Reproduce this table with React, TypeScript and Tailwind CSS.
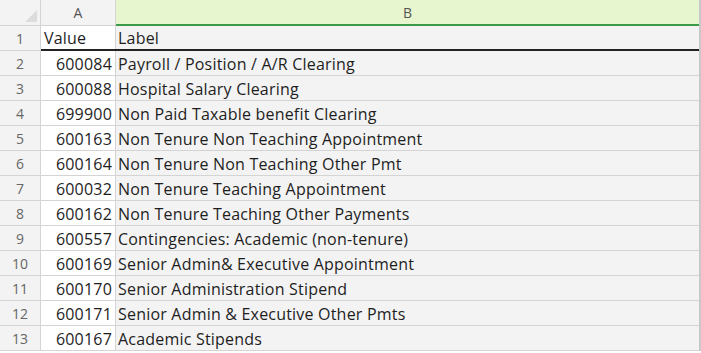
import React from 'react';

const rows: [string, string][] = [
  ['Value', 'Label'],
  ['600084', 'Payroll / Position / A/R Clearing'],
  ['600088', 'Hospital Salary Clearing'],
  ['699900', 'Non Paid Taxable benefit Clearing'],
  ['600163', 'Non Tenure Non Teaching Appointment'],
  ['600164', 'Non Tenure Non Teaching Other Pmt'],
  ['600032', 'Non Tenure Teaching Appointment'],
  ['600162', 'Non Tenure Teaching Other Payments'],
  ['600557', 'Contingencies: Academic (non-tenure)'],
  ['600169', 'Senior Admin& Executive Appointment'],
  ['600170', 'Senior Administration Stipend'],
  ['600171', 'Senior Admin & Executive Other Pmts'],
  ['600167', 'Academic Stipends'],
];

const App: React.FC = () => {
  return (
    <div className="w-[701px] h-[353px] overflow-hidden bg-white font-['Open_Sans','Noto_Sans',sans-serif] text-[16px] tracking-[0.2px] text-[#1e1e1e]">
      {/* column headers */}
      <div className="flex h-[26px]">
        <div className="relative w-[41px] shrink-0 bg-[#f3f3f3] border-r border-[#d4d4d4] border-b border-b-[#d4d4d4]">
          <div className="absolute right-[3px] bottom-[3px] w-0 h-0 border-l-[12px] border-l-transparent border-b-[12px] border-b-[#dcdcdc]" />
        </div>
        <div className="w-[75px] shrink-0 bg-[#f3f3f3] border-r border-[#d4d4d4] border-b border-b-[#d4d4d4] flex items-center justify-center text-[#555] text-[14px] tracking-normal">
          A
        </div>
        <div className="w-[583px] shrink-0 bg-[#e8f6d0] border-b-2 border-[#3c9a4a] flex items-center justify-center text-[#555] text-[14px] tracking-normal">
          B
        </div>
        <div className="w-[2px] bg-[#c8c8c8]" />
      </div>

      {rows.map(([value, label], i) => (
        <div key={i} className="flex h-[25px]">
          <div className="w-[41px] shrink-0 bg-[#f3f3f3] border-r border-b border-[#d4d4d4] flex items-center justify-center pt-[1px] text-[#666] text-[14px] tracking-normal">
            {i + 1}
          </div>
          <div
            className={
              i === 0
                ? 'flex w-[658px] shrink-0 border-b-2 border-[#222]'
                : 'flex w-[658px] shrink-0 border-b border-[#d4d4d4]'
            }
          >
            <div
              className={
                i === 0
                  ? 'w-[75px] shrink-0 bg-white border-r border-[#d4d4d4] flex items-center pt-[1px] pl-[3px]'
                  : 'w-[75px] shrink-0 bg-white border-r border-[#d4d4d4] flex items-center justify-end pt-[1px] pr-[3px]'
              }
            >
              {value}
            </div>
            <div className="w-[583px] shrink-0 bg-[#f3f3f3] flex items-center pt-[1px] pl-[2px]">{label}</div>
          </div>
          <div className="w-[2px] bg-[#c8c8c8]" />
        </div>
      ))}
    </div>
  );
};

export default App;
